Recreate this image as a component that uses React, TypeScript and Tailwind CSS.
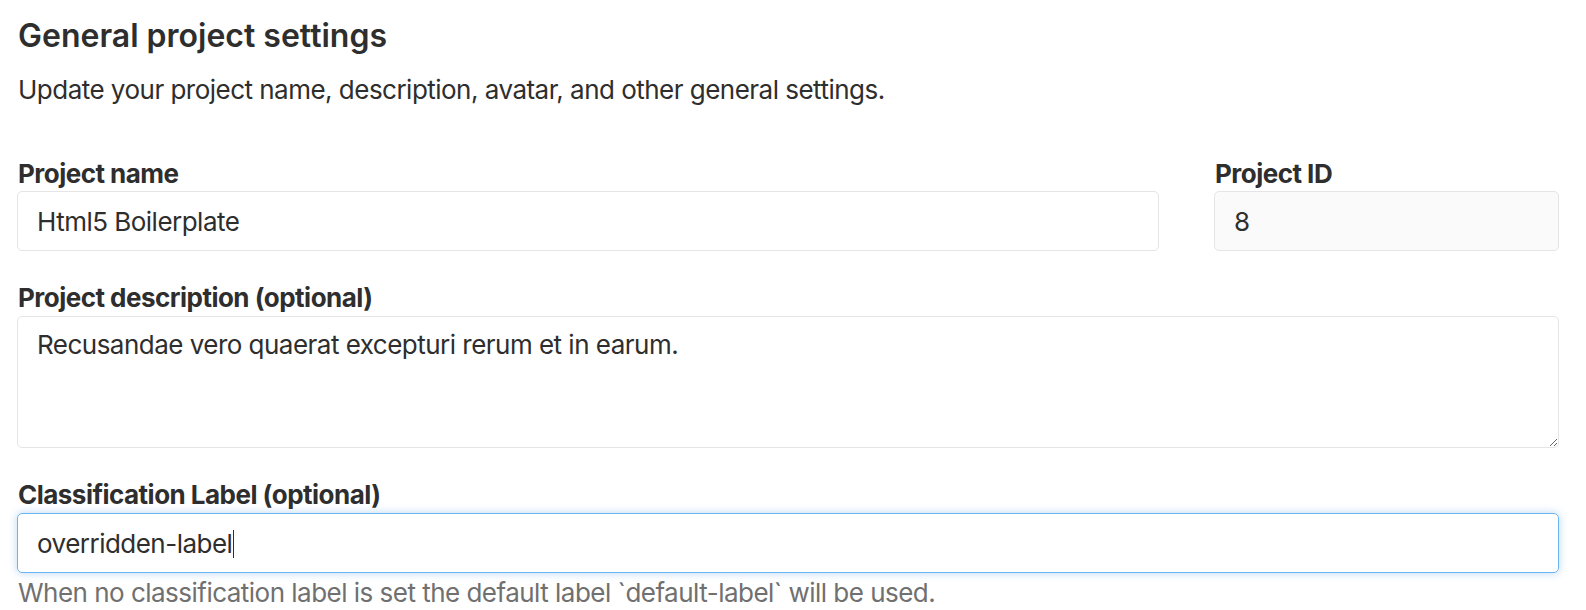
export default function App() {
  return (
    <div className="min-h-screen bg-white pl-[17px] pr-[27px] pt-[18px] text-[#2e2e2e] font-['Inter','Liberation_Sans',sans-serif]">
      <h4 className="ml-px text-[32px] font-semibold leading-[35px]">General project settings</h4>
      <p className="ml-px mt-[21px] text-[26px] leading-[32px] tracking-[-0.02em]">
        Update your project name, description, avatar, and other general settings.
      </p>

      <div className="mt-[52px] grid grid-cols-[1fr_345px] gap-x-[55px]">
        <div>
          <label className="ml-px block text-[26px] font-bold leading-[32px] tracking-[-0.02em]">Project name</label>
          <div className="mt-px flex h-[60px] items-center rounded-[5px] border border-[#e5e5e5] px-[19px] pt-px text-[26px] tracking-[-0.02em]">
            Html5 Boilerplate
          </div>
        </div>
        <div>
          <label className="ml-px block text-[26px] font-bold leading-[32px] tracking-[-0.02em]">Project ID</label>
          <div className="mt-px flex h-[60px] items-center rounded-[5px] border border-[#e5e5e5] bg-[#fafafa] px-[19px] pt-px text-[26px]">
            8
          </div>
        </div>
      </div>

      <div className="mt-[31px]">
        <label className="ml-px block text-[26px] font-bold leading-[32px] tracking-[-0.02em]">Project description (optional)</label>
        <textarea
          readOnly
          defaultValue="Recusandae vero quaerat excepturi rerum et in earum."
          className="mt-[2px] block h-[132px] w-full resize-y rounded-[5px] border border-[#e5e5e5] px-[19px] pt-[12px] pb-[8px] text-[26px] leading-[32px] tracking-[-0.02em] text-[#2e2e2e] outline-none"
        />
      </div>

      <div className="mt-[31px]">
        <label className="ml-px block text-[26px] font-bold leading-[32px] tracking-[-0.02em]">Classification Label (optional)</label>
        <div className="mt-[2px] flex h-[60px] items-center rounded-[5px] border border-[#6cb4f2] px-[19px] pt-px text-[26px] tracking-[-0.02em] shadow-[0_0_8px_rgba(31,120,209,0.3)]">
          overridden-label
          <span className="ml-px inline-block h-[28px] w-px bg-[#2e2e2e]" />
        </div>
        <p className="ml-px mt-[4px] text-[26px] leading-[32px] tracking-[-0.02em] text-[#707070]">
          When no classification label is set the default label `default-label` will be used.
        </p>
      </div>
    </div>
  );
}
